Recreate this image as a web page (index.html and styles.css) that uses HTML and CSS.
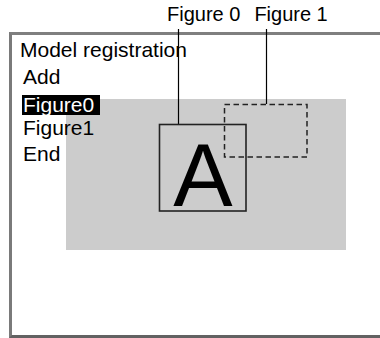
FILE: index.html
```html
<!DOCTYPE html>
<html>
<head>
<meta charset="utf-8">
<link rel="stylesheet" href="styles.css">
</head>
<body>
<div class="page">
  <div class="labels">
    <span class="label">Figure 0</span>
    <span class="label">Figure 1</span>
  </div>
  <div class="frame">
    <div class="image-area"></div>
    <div class="menu">
      <div class="title">Model registration</div>
      <div class="item">Add</div>
      <div class="item"><span class="selected">Figure0</span></div>
      <div class="item">Figure1</div>
      <div class="item">End</div>
    </div>
  </div>
  <svg class="diagram" width="380" height="338" viewBox="0 0 380 338">
    <line x1="178.5" y1="29" x2="178.5" y2="124" stroke="#000" stroke-width="1.2"/>
    <line x1="266.5" y1="29" x2="266.5" y2="104" stroke="#000" stroke-width="1.2"/>
    <rect x="159.5" y="124.5" width="86.5" height="86.5" fill="none" stroke="#222" stroke-width="1.6"/>
    <rect x="224.5" y="104.5" width="82.5" height="52.5" fill="none" stroke="#222" stroke-width="1.5" stroke-dasharray="5.5 3.5"/>
    <text x="203" y="206" text-anchor="middle" class="big-letter">A</text>
  </svg>
</div>
</body>
</html>
```
FILE: styles.css
```css
html, body {
  margin: 0;
  padding: 0;
  background: #fff;
}
body {
  width: 380px;
  height: 338px;
  overflow: hidden;
  font-family: "Liberation Sans", Arial, sans-serif;
  color: #000;
}
.page {
  position: relative;
  width: 380px;
  height: 338px;
}
.labels {
  display: flex;
  gap: 14px;
  height: 32px;
  padding-left: 167px;
  font-size: 20px;
  line-height: 28px;
}
.frame {
  position: relative;
  margin-left: 9px;
  width: 368px;
  height: 300px;
  border: 3px solid #7f7f7f;
  border-right: none;
  border-bottom-color: #626262;
  border-left-color: #7a7a7a;
}
.image-area {
  position: absolute;
  left: 54px;
  top: 64px;
  width: 280px;
  height: 151px;
  background: #cccccc;
  z-index: 0;
}
.menu {
  position: relative;
  z-index: 1;
  padding-top: 2px;
  font-size: 21px;
}
.title {
  line-height: 26px;
  padding-left: 8px;
  margin-bottom: 1px;
}
.item {
  line-height: 25.5px;
  padding-left: 11px;
}
.selected {
  display: inline-block;
  line-height: 20px;
  height: 20px;
  vertical-align: -2px;
  background: #000;
  color: #fff;
  padding: 0 6px 0 1px;
  margin-left: -1px;
}
.diagram {
  position: absolute;
  left: 0;
  top: 0;
  z-index: 2;
}
.big-letter {
  font-family: "Liberation Sans", Arial, sans-serif;
  font-size: 89px;
  fill: #000;
}
```
